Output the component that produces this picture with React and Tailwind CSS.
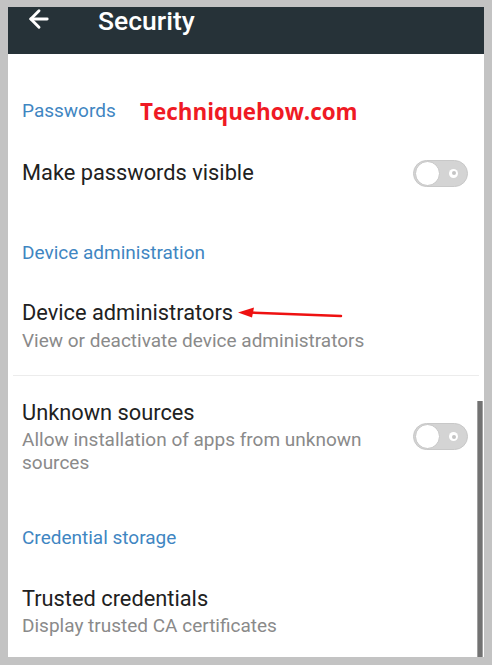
import { FiArrowLeft } from "react-icons/fi";

function Toggle() {
  return (
    <div className="relative w-[55px] h-[27px] rounded-full bg-[#d4d4d4] border border-[#c8c8c8] shrink-0">
      {/* knob */}
      <div className="absolute left-[1px] top-[0px] w-[25px] h-[25px] rounded-full bg-white border border-[#c6c6c6]" />
      {/* off marker */}
      <div className="absolute right-[9px] top-[8px] w-[9px] h-[9px] rounded-full bg-white flex items-center justify-center">
        <div className="w-[4px] h-[4px] rounded-full bg-[#c4c4c4]" />
      </div>
    </div>
  );
}

function Category({ children, className = "" }) {
  return (
    <div className={`px-[14px] text-[19px] leading-[24px] text-[#3f86c2] ${className}`}>
      {children}
    </div>
  );
}

export default function App() {
  return (
    <div
      className="w-[492px] h-[665px] bg-[#c3c3c3] pl-2 pr-2 pt-[7px] pb-2 overflow-hidden"
      style={{ fontFamily: "Roboto, 'Noto Sans', sans-serif" }}
    >
      <div className="w-[476px] h-[650px] flex flex-col">
        {/* Toolbar */}
        <div className="h-[47px] bg-[#263238] flex items-start shrink-0">
          <FiArrowLeft className="text-white text-[28px] ml-[17px] mt-[-2px]" strokeWidth={2.5} />
          <span className="ml-[45px] text-white text-[26.5px] leading-[28px] font-medium">
            Security
          </span>
        </div>

        {/* Body */}
        <div className="relative flex-1 bg-white">
          {/* Passwords */}
          <Category className="pt-[45px]">Passwords</Category>
          <div className="mt-[36px] pl-[14px] pr-[16px] flex items-center justify-between h-[28px]">
            <span className="text-[21.8px] leading-[28px] text-[#212121]">Make passwords visible</span>
            <Toggle />
          </div>

          {/* Device administration */}
          <Category className="mt-[54px]">Device administration</Category>
          <div className="mt-[34px] px-[14px]">
            <div className="text-[21.8px] leading-[28px] text-[#212121]">Device administrators</div>
            <div className="mt-[2px] text-[19px] leading-[24px] text-[#8a8a8a]">
              View or deactivate device administrators
            </div>
          </div>
          <div className="mt-[22px] mx-[5px] h-[1px] bg-[#ececec]" />

          {/* Unknown sources */}
          <div className="mt-[23px] pl-[14px] pr-[16px] flex items-start justify-between">
            <div className="w-[345px]">
              <div className="text-[21.8px] leading-[28px] text-[#212121]">Unknown sources</div>
              <div className="mt-[1px] text-[19px] leading-[23px] text-[#8a8a8a]">
                Allow installation of apps from unknown sources
              </div>
            </div>
            <div className="mt-[24px]">
              <Toggle />
            </div>
          </div>

          {/* Credential storage */}
          <Category className="mt-[52px]">Credential storage</Category>
          <div className="mt-[35px] px-[14px]">
            <div className="text-[21.8px] leading-[28px] text-[#212121]">Trusted credentials</div>
            <div className="mt-[1px] text-[19px] leading-[24px] text-[#8a8a8a]">
              Display trusted CA certificates
            </div>
          </div>

          {/* Scrollbar */}
          <div className="absolute right-[1px] top-[347px] bottom-0 w-[6px] bg-[#727272] border-x border-[#a0a0a0]" />

          {/* Watermark */}
          <div
            className="absolute left-[132px] top-[43px] text-[22.4px] leading-[30px] font-bold text-[#ef1a24]"
            style={{ fontFamily: "'Open Sans', sans-serif" }}
          >
            Techniquehow.com
          </div>

          {/* Red arrow */}
          <svg className="absolute left-[222px] top-[251px]" width="120" height="16" viewBox="0 0 120 16">
            <line x1="18" y1="7.5" x2="111" y2="11" stroke="#ee1111" strokeWidth="2.5" strokeLinecap="round" />
            <polygon points="8,7.5 24,2.5 22,12.5" fill="#ee1111" />
          </svg>
        </div>
      </div>
    </div>
  );
}
